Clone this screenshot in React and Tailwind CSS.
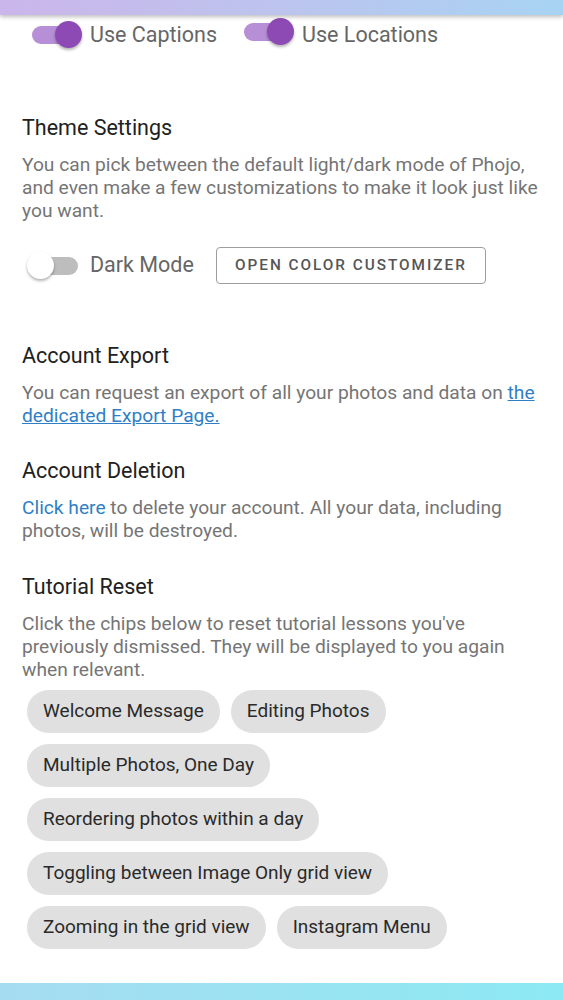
import { useState } from 'react'

const chips = [
  ['Welcome Message', 'Editing Photos'],
  ['Multiple Photos, One Day'],
  ['Reordering photos within a day'],
  ['Toggling between Image Only grid view'],
  ['Zooming in the grid view', 'Instagram Menu'],
]

function Toggle({ on, onClick }) {
  return (
    <button onClick={onClick} className="relative w-[50px] h-[28px] shrink-0">
      <span
        className={`absolute left-[2px] top-[5px] w-[46px] h-[18px] rounded-full ${
          on ? 'bg-[#b78fd6]' : 'bg-[#bdbdbd]'
        }`}
      />
      <span
        className={`absolute top-0 w-[27px] h-[27px] rounded-full shadow-[0_2px_3px_rgba(0,0,0,0.3)] ${
          on ? 'left-[25px] bg-[#8e4ab4]' : 'left-[-3px] bg-white'
        }`}
      />
    </button>
  )
}

function Section({ title, children }) {
  return (
    <div>
      <h2 className="text-[21.5px] leading-[28px] text-[#212121]">{title}</h2>
      <div className="mt-[11px] text-[19.2px] leading-[23px] text-[#757575]">{children}</div>
    </div>
  )
}

export default function App() {
  const [captions, setCaptions] = useState(true)
  const [locations, setLocations] = useState(true)
  const [dark, setDark] = useState(false)

  return (
    <div
      className="h-[1000px] flex flex-col bg-white overflow-hidden"
      style={{ fontFamily: 'Roboto, "Noto Sans", sans-serif' }}
    >
      {/* top app bar edge */}
      <div className="h-[15px] shrink-0 bg-gradient-to-r from-[#cbb5ea] via-[#bcc4ee] to-[#a7d3f3] shadow-[0_2px_4px_rgba(0,0,0,0.25)] z-10" />

      <div className="flex-1 pl-[22px] pr-[10px]">
        {/* Toggles */}
        <div className="flex items-center h-[32px] mt-[4px] pl-[8px]">
          <Toggle on={captions} onClick={() => setCaptions(!captions)} />
          <span className="ml-[10px] text-[21.5px] text-[#666]">Use Captions</span>
          <span className="ml-[25px]">
            <Toggle on={locations} onClick={() => setLocations(!locations)} />
          </span>
          <span className="ml-[10px] text-[21.5px] text-[#666]">Use Locations</span>
        </div>

        <div className="mt-[63px]">
          <Section title="Theme Settings">
            You can pick between the default light/dark mode of Phojo, and even make a few
            customizations to make it look just like you want.
          </Section>
          <div className="flex items-center h-[37px] mt-[25px] pl-[8px]">
            <Toggle on={dark} onClick={() => setDark(!dark)} />
            <span className="ml-[10px] text-[21.5px] text-[#666]">Dark Mode</span>
            <button className="ml-[22px] h-[37px] w-[270px] border border-[#9e9e9e] rounded-[4px] text-[15.3px] font-medium tracking-[0.13em] text-[#555]">
              OPEN COLOR CUSTOMIZER
            </button>
          </div>
        </div>

        <div className="mt-[58px]">
          <Section title="Account Export">
            You can request an export of all your photos and data on{' '}
            <a href="#" className="text-[#2f7fc7] underline">
              the dedicated Export Page.
            </a>
          </Section>
        </div>

        <div className="mt-[30px]">
          <Section title="Account Deletion">
            <a href="#" className="text-[#2f7fc7]">
              Click here
            </a>{' '}
            to delete your account. All your data, including photos, will be destroyed.
          </Section>
        </div>

        <div className="mt-[31px]">
          <Section title="Tutorial Reset">
            Click the chips below to reset tutorial lessons you've previously dismissed. They
            will be displayed to you again when relevant.
          </Section>
          <div className="mt-[9px] pl-[5px] flex flex-col gap-[11px]">
            {chips.map((row, i) => (
              <div key={i} className="flex gap-[11px]">
                {row.map(label => (
                  <button
                    key={label}
                    className="h-[43px] px-[16px] rounded-full bg-[#e0e0e0] text-[19px] text-[#2a2a2a]"
                  >
                    {label}
                  </button>
                ))}
              </div>
            ))}
          </div>
        </div>
      </div>

      {/* bottom nav edge */}
      <div className="h-[17px] shrink-0 bg-gradient-to-r from-[#a6dcf2] to-[#8ce9f3]" />
    </div>
  )
}
